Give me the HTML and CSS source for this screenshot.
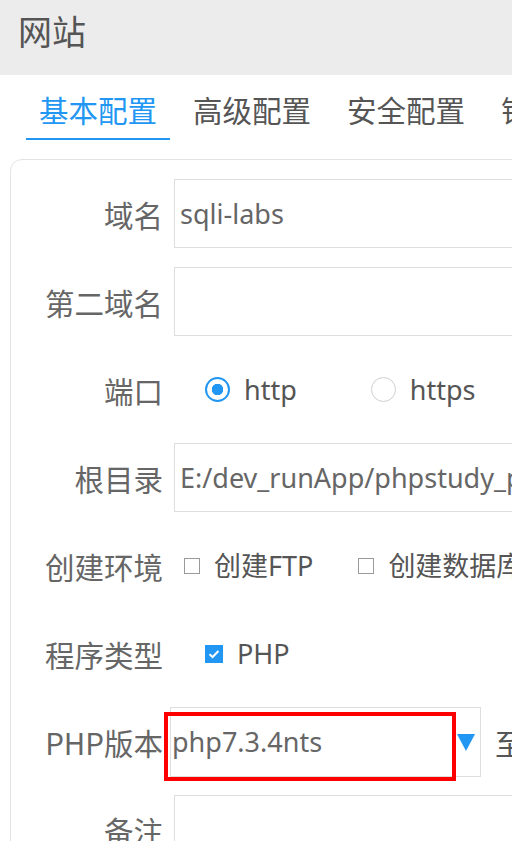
FILE: index.html
```html
<!DOCTYPE html>
<html lang="zh-CN">
<head>
<meta charset="utf-8">
<title>网站</title>
<link rel="stylesheet" href="styles.css">
</head>
<body>
<div class="titlebar">网站</div>
<div class="tabs">
  <div class="tab active">基本配置</div>
  <div class="tab">高级配置</div>
  <div class="tab">安全配置</div>
  <div class="tab">错误页面</div>
</div>
<div class="card">
  <div class="row">
    <div class="label">域名</div>
    <div class="field"><div class="input">sqli-labs</div></div>
  </div>
  <div class="row">
    <div class="label">第二域名</div>
    <div class="field"><div class="input"></div></div>
  </div>
  <div class="row">
    <div class="label">端口</div>
    <div class="field opts indent">
      <span class="radio on"></span><span class="opt-text">http</span>
      <span class="radio off second-radio"></span><span class="opt-text">https</span>
    </div>
  </div>
  <div class="row">
    <div class="label">根目录</div>
    <div class="field"><div class="input">E:/dev_runApp/phpstudy_pro/WWW/sqli-labs</div></div>
  </div>
  <div class="row">
    <div class="label">创建环境</div>
    <div class="field opts small-indent">
      <span class="check"></span><span class="opt-text cjk">创建FTP</span>
      <span class="check second-check"></span><span class="opt-text cjk">创建数据库</span>
    </div>
  </div>
  <div class="row">
    <div class="label">程序类型</div>
    <div class="field opts indent">
      <span class="check checked"><svg viewBox="0 0 18 18" width="18" height="18"><path d="M4.5 9.2 L7.6 12 L13.4 6" fill="none" stroke="#fff" stroke-width="2"/></svg></span><span class="opt-text">PHP</span>
    </div>
  </div>
  <div class="row">
    <div class="label">PHP版本</div>
    <div class="field select-field">
      <div class="select">
        <span class="select-text">php7.3.4nts</span>
        <span class="caret"></span>
      </div>
      <span class="after">至</span>
      <div class="highlight"></div>
    </div>
  </div>
  <div class="row">
    <div class="label">备注</div>
    <div class="field"><div class="input tall"></div></div>
  </div>
</div>
</body>
</html>
```

FILE: styles.css
```css
html, body {
  margin: 0;
  padding: 0;
  background: #ffffff;
}
body {
  width: 512px;
  height: 841px;
  overflow: hidden;
  font-family: "Noto Sans", "Noto Sans CJK SC", sans-serif;
  color: #555;
}
.titlebar {
  height: 75px;
  box-sizing: border-box;
  background: #ececec;
  padding: 11px 0 0 18px;
  font-size: 34px;
  line-height: 40px;
  color: #555;
  font-family: "Noto Sans CJK SC", sans-serif;
}
.tabs {
  display: flex;
  padding-left: 26px;
  white-space: nowrap;
  margin-bottom: 19px;
}
.tab {
  font-family: "Noto Sans CJK SC", sans-serif;
  font-size: 29.5px;
  line-height: 40px;
  padding: 14px 13px 9px;
  border-bottom: 2px solid transparent;
  color: #555;
  margin-right: 10px;
  flex: none;
}
.tab.active {
  color: #2196f3;
  border-bottom-color: #2196f3;
}
.card {
  margin-left: 10px;
  width: 700px;
  border: 1px solid #e3e3e3;
  border-radius: 12px;
  padding-top: 19px;
  display: flex;
  flex-direction: column;
  gap: 19px;
}
.row {
  display: flex;
  align-items: center;
  height: 69px;
}
.label {
  width: 152px;
  flex: none;
  text-align: right;
  font-family: "Noto Sans CJK SC", sans-serif;
  font-size: 29.5px;
  line-height: 40px;
  color: #666;
  white-space: nowrap;
}
.field {
  margin-left: 11px;
  flex: 1;
  height: 100%;
  display: flex;
  align-items: center;
}
.input {
  width: 100%;
  height: 100%;
  box-sizing: border-box;
  border: 1px solid #dedede;
  padding-left: 5px;
  font-size: 27px;
  color: #666;
  display: flex;
  align-items: center;
  white-space: nowrap;
  overflow: hidden;
}
.input.tall {
  height: 100%;
}
.opts {
  white-space: nowrap;
}
.indent {
  padding-left: 31px;
}
.small-indent {
  padding-left: 10px;
}
.radio {
  width: 25px;
  height: 25px;
  box-sizing: border-box;
  border-radius: 50%;
  flex: none;
  position: relative;
}
.radio.on {
  border: 2px solid #2196f3;
  background: radial-gradient(circle, #2196f3 0 5.5px, #fff 6px);
}
.radio.off {
  border: 1.5px solid #cfcfcf;
}
.second-radio {
  margin-left: 74px;
}
.opt-text {
  font-size: 27px;
  color: #555;
  margin-left: 14px;
  line-height: 40px;
}
.opt-text.cjk {
  font-size: 27px;
}
.check {
  width: 16px;
  height: 16px;
  box-sizing: border-box;
  border: 1.5px solid #9a9a9a;
  flex: none;
}
.second-check {
  margin-left: 45px;
}
.check.checked {
  width: 18px;
  height: 18px;
  border: none;
  background: #2196f3;
  display: flex;
}
.select-field {
  position: relative;
  margin-left: 7px;
}
.select {
  width: 311px;
  height: 70px;
  box-sizing: border-box;
  border: 1px solid #dedede;
  display: flex;
  align-items: center;
  padding-left: 1px;
  flex: none;
}
.select-text {
  flex: 1;
  font-size: 27px;
  color: #666;
}
.caret {
  width: 0;
  height: 0;
  border-left: 9px solid transparent;
  border-right: 9px solid transparent;
  border-top: 17px solid #2196f3;
  margin-right: 5px;
  margin-top: 2px;
}
.after {
  margin-left: 14px;
  font-family: "Noto Sans CJK SC", sans-serif;
  font-size: 29.5px;
  color: #555;
}
.highlight {
  position: absolute;
  left: -6px;
  top: 5px;
  width: 292px;
  height: 69px;
  box-sizing: border-box;
  border: 4.5px solid #ff0000;
}
```
